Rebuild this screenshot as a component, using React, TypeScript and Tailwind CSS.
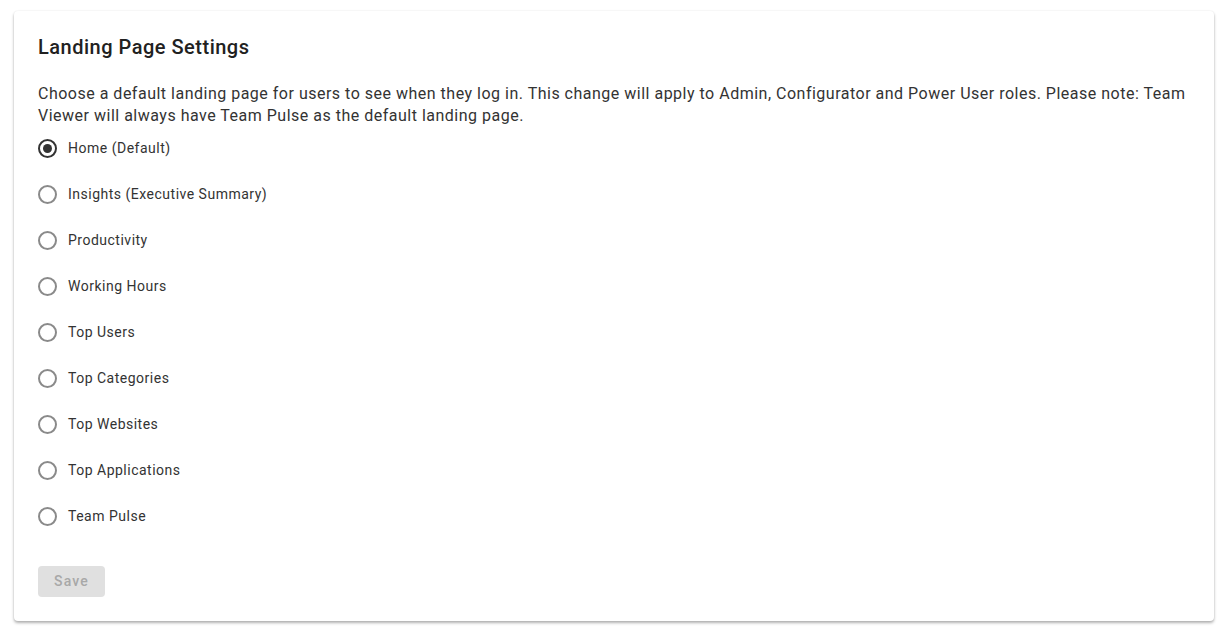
import React, { useState } from "react";

const options = [
  "Home (Default)",
  "Insights (Executive Summary)",
  "Productivity",
  "Working Hours",
  "Top Users",
  "Top Categories",
  "Top Websites",
  "Top Applications",
  "Team Pulse",
];

export default function App() {
  const [selected, setSelected] = useState(0);
  return (
    <div
      className="min-h-[630px] w-full bg-white pt-[11px] pl-[14px] pr-[14px]"
      style={{ fontFamily: "Roboto, 'Liberation Sans', sans-serif" }}
    >
      <div className="rounded-[4px] bg-white px-6 pt-6 pb-6 shadow-[0_2px_3px_rgba(0,0,0,0.3),0_0_2px_rgba(0,0,0,0.08)]">
        <h2 className="h-6 text-[20px] leading-6 font-medium tracking-[0.5px] text-[#212121]">
          Landing Page Settings
        </h2>
        <p className="mt-6 text-[16px] leading-[22px] tracking-[0.5px] text-[#333333]">
          Choose a default landing page for users to see when they log in. This change will apply to Admin, Configurator and Power User roles. Please note: Team Viewer will always have Team Pulse as the default landing page.
        </p>
        <div className="flex flex-col gap-1">
          {options.map((o, i) => (
            <label
              key={o}
              className="flex h-[42px] cursor-pointer items-center"
              onClick={() => setSelected(i)}
            >
              <span
                className={
                  i === selected
                    ? "flex h-[19px] w-[19px] items-center justify-center rounded-full border-2 border-[#333333]"
                    : "flex h-[19px] w-[19px] items-center justify-center rounded-full border-2 border-[#8a8a8a]"
                }
              >
                {i === selected && <span className="h-[9px] w-[9px] rounded-full bg-[#333333]" />}
              </span>
              <span className="ml-[11px] pt-[1px] text-[14px] tracking-[0.5px] text-[#333333]">{o}</span>
            </label>
          ))}
        </div>
        <button
          disabled
          className="mt-[29px] flex h-[31px] w-[67px] items-center justify-center rounded-[4px] bg-[#e0e0e0] text-[14px] font-medium tracking-[1.2px] text-[#a8a8a8]"
        >
          Save
        </button>
      </div>
    </div>
  );
}
